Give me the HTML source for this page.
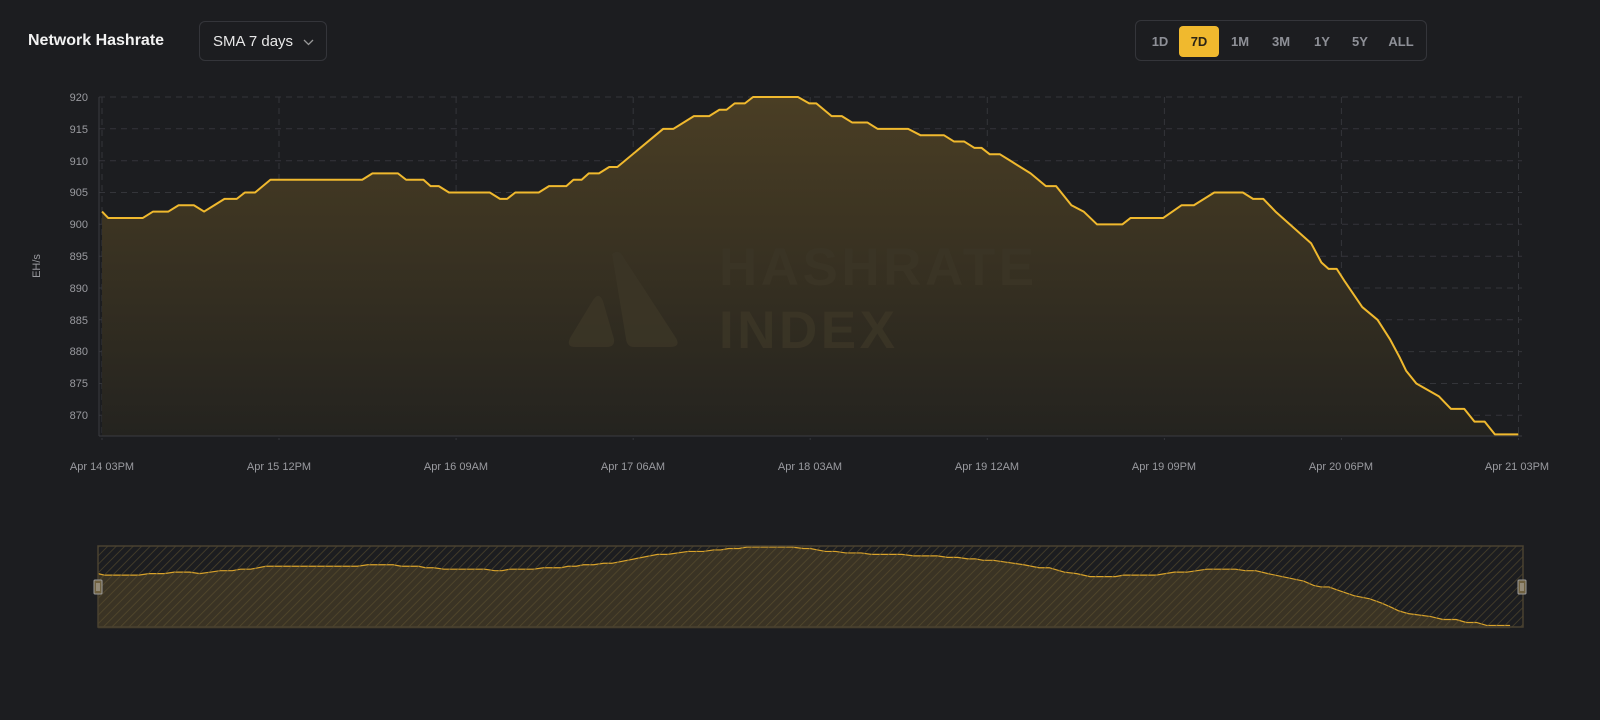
<!DOCTYPE html>
<html><head><meta charset="utf-8"><style>
html,body{margin:0;padding:0;background:#1c1d20;width:1600px;height:720px;overflow:hidden;font-family:"Liberation Sans",sans-serif}
.t{position:absolute;left:28px;top:32px;color:#f2f2f2;font-weight:bold;font-size:16px}
.sel{position:absolute;left:199px;top:21px;width:128px;height:40px;border:1px solid #34353a;border-radius:6px;box-sizing:border-box;color:#e8e8e8;font-size:15px;line-height:40px;padding-left:13px}
.rng{position:absolute;left:1135px;top:20px;width:292px;height:41px;border:1px solid #34353a;border-radius:6px;box-sizing:border-box}
.rng span{position:absolute;top:5px;height:31px;line-height:31px;font-size:13px;font-weight:bold;color:#8e9097;text-align:center}
.rng .a{background:#f0b92e;color:#2a2416;border-radius:4px}
</style></head><body>
<div class="t">Network Hashrate</div>
<div class="sel">SMA 7 days<svg style="position:absolute;left:103px;top:17px" width="11" height="7" viewBox="0 0 11 7"><path d="M1 1L5.5 5.5L10 1" fill="none" stroke="#999" stroke-width="1.3"/></svg></div>
<div class="rng">
<span style="left:9px;width:30px">1D</span>
<span class="a" style="left:43px;width:40px">7D</span>
<span style="left:86px;width:36px">1M</span>
<span style="left:125px;width:40px">3M</span>
<span style="left:168px;width:36px">1Y</span>
<span style="left:206px;width:36px">5Y</span>
<span style="left:245px;width:40px">ALL</span>
</div>
<svg style="position:absolute;left:0;top:0" width="1600" height="720">
<defs>
<linearGradient id="g" x1="0" y1="0" x2="0" y2="1"><stop offset="0" stop-color="#4a3e24"/><stop offset="1" stop-color="#24231f"/></linearGradient>
<pattern id="h" width="6" height="6" patternUnits="userSpaceOnUse" patternTransform="rotate(45)"><line x1="0" y1="0" x2="0" y2="6" stroke="#5e5130" stroke-width="1.6"/></pattern>
</defs>
<g stroke="#34353a" stroke-dasharray="6,5" stroke-width="1">
<line x1="99" x2="1522" y1="97" y2="97"/><line x1="99" x2="1522" y1="128.8" y2="128.8"/><line x1="99" x2="1522" y1="160.7" y2="160.7"/><line x1="99" x2="1522" y1="192.5" y2="192.5"/><line x1="99" x2="1522" y1="224.3" y2="224.3"/><line x1="99" x2="1522" y1="256.2" y2="256.2"/><line x1="99" x2="1522" y1="288" y2="288"/><line x1="99" x2="1522" y1="319.8" y2="319.8"/><line x1="99" x2="1522" y1="351.6" y2="351.6"/><line x1="99" x2="1522" y1="383.5" y2="383.5"/><line x1="99" x2="1522" y1="415.3" y2="415.3"/>
<line y1="97" y2="440" x1="102" x2="102"/><line y1="97" y2="440" x1="279" x2="279"/><line y1="97" y2="440" x1="456.1" x2="456.1"/><line y1="97" y2="440" x1="633.2" x2="633.2"/><line y1="97" y2="440" x1="810.2" x2="810.2"/><line y1="97" y2="440" x1="987.3" x2="987.3"/><line y1="97" y2="440" x1="1164.4" x2="1164.4"/><line y1="97" y2="440" x1="1341.4" x2="1341.4"/><line y1="97" y2="440" x1="1518.5" x2="1518.5"/>
</g>
<g transform="translate(0,97) scale(1.0204,6.366)">
<polygon fill="url(#g)" points="100,53.2 100,18 106,19 140,19 150,18 165,18 175,17 190,17 200,18 210,17 220,16 232,16 240,15 250,15 265,13 355,13 365,12 390,12 398,13 415,13 422,14 430,14 440,15 480,15 490,16 497,16 505,15 528,15 538,14 555,14 562,13 570,13 577,12 587,12 597,11 605,11 650,5 660,5 680,3 695,3 705,2 712,2 720,1 730,1 738,0 782,0 793,1 800,1 815,3 825,3 835,4 850,4 860,5 890,5 902,6 925,6 935,7 945,7 955,8 962,8 970,9 980,9 990,10 1010,12 1025,14 1035,14 1045,16 1050,17 1062,18 1075,20 1082,20 1100,20 1108,19 1140,19 1158,17 1170,17 1190,15 1218,15 1228,16 1238,16 1250,18 1285,23 1295,26 1302,27 1310,27 1318,29 1335,33 1350,35 1362,38 1372,41 1378,43 1388,45 1410,47 1422,49 1435,49 1445,51 1455,51 1465,53 1488,53 1488,53.2"/>
</g>
<g fill="#3b3526" opacity="0.9">
<path d="M612 254 Q619 248 624 258 L676 338 Q681 347 670 347 L634 347 Q627 347 626 339 Z"/>
<path d="M593 300 Q599 291 603 301 L614 339 Q615 347 607 347 L575 347 Q566 347 570 338 Z"/>
<text x="719" y="285" font-family="Liberation Sans,sans-serif" font-weight="bold" font-size="53" letter-spacing="3.5">HASHRATE</text>
<text x="719" y="348" font-family="Liberation Sans,sans-serif" font-weight="bold" font-size="53" letter-spacing="3.5">INDEX</text>
</g>
<g transform="translate(0,97) scale(1.0204,6.366)">
<polyline fill="none" stroke="#f0b92e" stroke-width="2" vector-effect="non-scaling-stroke" stroke-linejoin="round" points="100,18 106,19 140,19 150,18 165,18 175,17 190,17 200,18 210,17 220,16 232,16 240,15 250,15 265,13 355,13 365,12 390,12 398,13 415,13 422,14 430,14 440,15 480,15 490,16 497,16 505,15 528,15 538,14 555,14 562,13 570,13 577,12 587,12 597,11 605,11 650,5 660,5 680,3 695,3 705,2 712,2 720,1 730,1 738,0 782,0 793,1 800,1 815,3 825,3 835,4 850,4 860,5 890,5 902,6 925,6 935,7 945,7 955,8 962,8 970,9 980,9 990,10 1010,12 1025,14 1035,14 1045,16 1050,17 1062,18 1075,20 1082,20 1100,20 1108,19 1140,19 1158,17 1170,17 1190,15 1218,15 1228,16 1238,16 1250,18 1285,23 1295,26 1302,27 1310,27 1318,29 1335,33 1350,35 1362,38 1372,41 1378,43 1388,45 1410,47 1422,49 1435,49 1445,51 1455,51 1465,53 1488,53"/>
</g>
<line x1="99" y1="97" x2="99" y2="436" stroke="#3a3b40"/>
<line x1="99" y1="436" x2="1522" y2="436" stroke="#3a3b40"/>
<g fill="#9a9ba0" font-size="11" text-anchor="end" font-family="Liberation Sans,sans-serif">
<text x="88" y="101">920</text><text x="88" y="133">915</text><text x="88" y="165">910</text><text x="88" y="196">905</text><text x="88" y="228">900</text><text x="88" y="260">895</text><text x="88" y="292">890</text><text x="88" y="324">885</text><text x="88" y="355">880</text><text x="88" y="387">875</text><text x="88" y="419">870</text>
</g>
<text transform="translate(40,266) rotate(-90)" fill="#9a9ba0" font-size="11" text-anchor="middle" font-family="Liberation Sans,sans-serif">EH/s</text>
<g fill="#9a9ba0" font-size="11" text-anchor="middle" font-family="Liberation Sans,sans-serif">
<text x="102" y="470">Apr 14 03PM</text><text x="279" y="470">Apr 15 12PM</text><text x="456" y="470">Apr 16 09AM</text><text x="633" y="470">Apr 17 06AM</text><text x="810" y="470">Apr 18 03AM</text><text x="987" y="470">Apr 19 12AM</text><text x="1164" y="470">Apr 19 09PM</text><text x="1341" y="470">Apr 20 06PM</text><text x="1517" y="470">Apr 21 03PM</text>
</g>
<g transform="translate(0,547) scale(1.0173,1.48) translate(-3.6,0)">
<polygon fill="#3a3324" points="100,55 100,18 106,19 140,19 150,18 165,18 175,17 190,17 200,18 210,17 220,16 232,16 240,15 250,15 265,13 355,13 365,12 390,12 398,13 415,13 422,14 430,14 440,15 480,15 490,16 497,16 505,15 528,15 538,14 555,14 562,13 570,13 577,12 587,12 597,11 605,11 650,5 660,5 680,3 695,3 705,2 712,2 720,1 730,1 738,0 782,0 793,1 800,1 815,3 825,3 835,4 850,4 860,5 890,5 902,6 925,6 935,7 945,7 955,8 962,8 970,9 980,9 990,10 1010,12 1025,14 1035,14 1045,16 1050,17 1062,18 1075,20 1082,20 1100,20 1108,19 1140,19 1158,17 1170,17 1190,15 1218,15 1228,16 1238,16 1250,18 1285,23 1295,26 1302,27 1310,27 1318,29 1335,33 1350,35 1362,38 1372,41 1378,43 1388,45 1410,47 1422,49 1435,49 1445,51 1455,51 1465,53 1488,53 1488,55"/>
<polyline fill="none" stroke="#d9a32a" stroke-width="1.2" vector-effect="non-scaling-stroke" points="100,18 106,19 140,19 150,18 165,18 175,17 190,17 200,18 210,17 220,16 232,16 240,15 250,15 265,13 355,13 365,12 390,12 398,13 415,13 422,14 430,14 440,15 480,15 490,16 497,16 505,15 528,15 538,14 555,14 562,13 570,13 577,12 587,12 597,11 605,11 650,5 660,5 680,3 695,3 705,2 712,2 720,1 730,1 738,0 782,0 793,1 800,1 815,3 825,3 835,4 850,4 860,5 890,5 902,6 925,6 935,7 945,7 955,8 962,8 970,9 980,9 990,10 1010,12 1025,14 1035,14 1045,16 1050,17 1062,18 1075,20 1082,20 1100,20 1108,19 1140,19 1158,17 1170,17 1190,15 1218,15 1228,16 1238,16 1250,18 1285,23 1295,26 1302,27 1310,27 1318,29 1335,33 1350,35 1362,38 1372,41 1378,43 1388,45 1410,47 1422,49 1435,49 1445,51 1455,51 1465,53 1488,53"/>
</g>
<rect x="98" y="546" width="1425" height="81" fill="url(#h)" opacity="0.7"/>
<rect x="98" y="546" width="1425" height="81" fill="none" stroke="#4a4230" stroke-width="1.5"/>
<g fill="#6e6040" stroke="#9a9a9a" stroke-width="1">
<rect x="94" y="580" width="8" height="14" rx="1"/><rect x="1518" y="580" width="8" height="14" rx="1"/>
</g>
<g stroke="#ccc" stroke-width="0.8"><line x1="97" y1="583" x2="97" y2="591"/><line x1="99" y1="583" x2="99" y2="591"/><line x1="1521" y1="583" x2="1521" y2="591"/><line x1="1523" y1="583" x2="1523" y2="591"/></g>
</svg>
</body></html>
